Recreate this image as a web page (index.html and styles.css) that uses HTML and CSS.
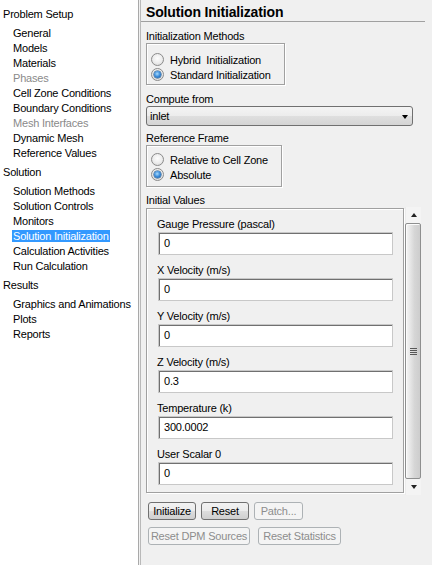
FILE: index.html
```html
<!DOCTYPE html>
<html>
<head>
<meta charset="utf-8">
<link rel="stylesheet" href="styles.css">
</head>
<body>
<div class="app">
  <nav class="tree">
    <div class="sec">
      <div class="sec-title">Problem Setup</div>
      <ul class="items">
        <li>General</li>
        <li>Models</li>
        <li>Materials</li>
        <li class="dis">Phases</li>
        <li>Cell Zone Conditions</li>
        <li>Boundary Conditions</li>
        <li class="dis">Mesh Interfaces</li>
        <li>Dynamic Mesh</li>
        <li>Reference Values</li>
      </ul>
    </div>
    <div class="sec">
      <div class="sec-title">Solution</div>
      <ul class="items">
        <li>Solution Methods</li>
        <li>Solution Controls</li>
        <li>Monitors</li>
        <li><span class="sel">Solution Initialization</span></li>
        <li>Calculation Activities</li>
        <li>Run Calculation</li>
      </ul>
    </div>
    <div class="sec">
      <div class="sec-title">Results</div>
      <ul class="items">
        <li>Graphics and Animations</li>
        <li>Plots</li>
        <li>Reports</li>
      </ul>
    </div>
  </nav>

  <main class="panel">
    <h1 class="title">Solution Initialization</h1>

    <div class="lbl lbl-methods">Initialization Methods</div>
    <div class="group group-methods">
      <div class="radio"><span class="dot"></span>Hybrid&nbsp; Initialization</div>
      <div class="radio"><span class="dot on"></span>Standard Initialization</div>
    </div>

    <div class="lbl lbl-compute">Compute from</div>
    <div class="select"><span>inlet</span><span class="arrow"></span></div>

    <div class="lbl lbl-frame">Reference Frame</div>
    <div class="group group-frame">
      <div class="radio"><span class="dot"></span>Relative to Cell Zone</div>
      <div class="radio"><span class="dot on"></span>Absolute</div>
    </div>

    <div class="lbl lbl-init">Initial Values</div>
    <div class="vals-row">
      <div class="vals">
        <div class="fl">Gauge Pressure (pascal)</div>
        <div class="inp">0</div>
        <div class="fl">X Velocity (m/s)</div>
        <div class="inp">0</div>
        <div class="fl">Y Velocity (m/s)</div>
        <div class="inp">0</div>
        <div class="fl">Z Velocity (m/s)</div>
        <div class="inp">0.3</div>
        <div class="fl">Temperature (k)</div>
        <div class="inp">300.0002</div>
        <div class="fl">User Scalar 0</div>
        <div class="inp">0</div>
      </div>
      <div class="sb">
        <div class="sb-btn"><span class="tri-up"></span></div>
        <div class="thumb"><span class="grip"></span></div>
        <div class="sb-btn"><span class="tri-down"></span></div>
      </div>
    </div>

    <div class="btns">
      <div class="btn w-init">Initialize</div>
      <div class="btn w-reset">Reset</div>
      <div class="btn dis w-patch">Patch...</div>
    </div>
    <div class="btns btns2">
      <div class="btn dis w-dpm">Reset DPM Sources</div>
      <div class="btn dis w-stats">Reset Statistics</div>
    </div>
  </main>
</div>
</body>
</html>
```

FILE: styles.css
```css
html, body {
  margin: 0;
  padding: 0;
  background: #f0f0f0;
}
body {
  font-family: "Liberation Sans", Arial, sans-serif;
  font-size: 11px;
  letter-spacing: -0.2px;
  color: #000;
}
.app {
  display: flex;
  height: 565px;
}

/* ---------- tree ---------- */
.tree {
  width: 138px;
  background: #fff;
  border-right: 1px solid #a9a9a9;
  padding-top: 7px;
  flex: none;
}
.sec { margin-bottom: 4px; }
.sec-title {
  line-height: 15px;
  padding-left: 3px;
  margin-bottom: 4px;
}
.items {
  list-style: none;
  margin: 0;
  padding: 0;
}
.items li {
  line-height: 15px;
  padding-left: 13px;
  white-space: nowrap;
}
.items li.dis { color: #8a8a8a; }
.sel {
  background: #3399ff;
  color: #fff;
  padding: 0 1px;
  margin-left: -1px;
}

/* ---------- panel ---------- */
.panel {
  flex: 1;
  margin-left: 1px;
  border-left: 1px solid #b9b9b9;
  padding-left: 5px;
  display: flex;
  flex-direction: column;
  align-items: flex-start;
}
.title {
  margin: 0 7px 0 -5px;
  padding: 4px 0 0 5px;
  height: 17px;
  line-height: 17px;
  font-size: 14px;
  font-weight: bold;
  letter-spacing: -0.15px;
  border-bottom: 1px solid #a0a0a0;
  align-self: stretch;
}
.lbl { line-height: 14px; }
.lbl-methods { margin-top: 7px; }
.lbl-compute { margin-top: 7px; }
.lbl-frame { margin-top: 5px; }
.lbl-init { margin-top: 6px; }

.group {
  box-sizing: border-box;
  height: 42px;
  border: 1px solid #a0a0a0;
  box-shadow: inset 1px 1px 0 #fff, 1px 1px 0 #fff;
  padding-left: 4px;
}
.group-methods { width: 139px; padding-top: 8px; }
.group-frame { width: 136px; padding-top: 6px; }

.radio {
  display: flex;
  align-items: center;
  height: 15px;
  white-space: nowrap;
}
.dot {
  position: relative;
  width: 11px;
  height: 11px;
  border: 1px solid #8b8b8b;
  border-radius: 50%;
  background: radial-gradient(circle at 50% 40%, #fefefe 0%, #ececec 55%, #cfcfcf 100%);
  margin-right: 6px;
  flex: none;
}
.dot.on::after {
  content: "";
  position: absolute;
  left: 2px;
  top: 2px;
  width: 7px;
  height: 7px;
  border-radius: 50%;
  background: radial-gradient(circle at 45% 40%, #a8dcff 0%, #3a8ad8 50%, #0e4f92 100%);
  box-shadow: 0 0 0 0.5px #1b4a78;
}

.select {
  box-sizing: border-box;
  width: 267px;
  height: 20px;
  border: 1px solid #707070;
  border-radius: 3px;
  background: linear-gradient(#f4f4f4 0%, #ececec 50%, #dfdfdf 51%, #d4d4d4 100%);
  display: flex;
  align-items: center;
  justify-content: space-between;
  padding: 0 4px 0 3px;
}
.arrow {
  width: 0;
  height: 0;
  border-top: 4px solid #000;
  border-left: 3.5px solid transparent;
  border-right: 3.5px solid transparent;
  margin-top: 1px;
}

/* ---------- initial values ---------- */
.vals-row {
  display: flex;
  align-items: flex-start;
}
.vals {
  box-sizing: border-box;
  width: 258px;
  height: 285px;
  margin-top: 1px;
  border: 1px solid #a0a0a0;
  box-shadow: inset 1px 1px 0 #fff, 1px 1px 0 #fff;
  padding: 8px 0 0 10px;
  overflow: hidden;
}
.fl {
  line-height: 15px;
  white-space: nowrap;
}
.inp {
  box-sizing: border-box;
  width: 235px;
  height: 23px;
  margin: 0 0 8px 1px;
  background: #fff;
  border: 1px solid #c8c8c8;
  box-shadow: inset 1px 1px 0 #707070;
  padding-left: 5px;
  line-height: 21px;
}

.sb {
  box-sizing: border-box;
  width: 16px;
  height: 288px;
  margin-left: 1px;
  background: #f4f4f4;
  border-left: 1px solid #ebebeb;
  display: flex;
  flex-direction: column;
}
.sb-btn {
  height: 16px;
  display: flex;
  align-items: center;
  justify-content: center;
  flex: none;
}
.tri-up {
  width: 0;
  height: 0;
  border-bottom: 4px solid #222;
  border-left: 3.5px solid transparent;
  border-right: 3.5px solid transparent;
}
.tri-down {
  width: 0;
  height: 0;
  border-top: 4px solid #222;
  border-left: 3.5px solid transparent;
  border-right: 3.5px solid transparent;
}
.thumb {
  flex: 1;
  box-sizing: border-box;
  margin: 0 0 0 -1px;
  border: 1px solid #8e8f8f;
  border-radius: 2px;
  background: linear-gradient(to right, #f6f6f6 0%, #e4e4e4 35%, #d6d6d6 60%, #cdcdcd 100%);
  box-shadow: inset 1px 1px 0 #fbfbfb;
  display: flex;
  align-items: center;
  justify-content: center;
}
.grip {
  width: 7px;
  height: 7px;
  background: repeating-linear-gradient(to bottom, #585858 0 1px, transparent 1px 2px);
}

/* ---------- buttons ---------- */
.btns {
  display: flex;
  gap: 5px;
  margin: 7px 0 0 2px;
}
.btns2 { gap: 8px; }
.btn {
  box-sizing: border-box;
  height: 18px;
  line-height: 16px;
  text-align: center;
  border: 1px solid #707070;
  border-radius: 3px;
  background: linear-gradient(#f2f2f2 0%, #ebebeb 50%, #dddddd 51%, #cfcfcf 100%);
  white-space: nowrap;
}
.btn.dis {
  border-color: #adb2b5;
  background: #f4f4f4;
  color: #8d8d8d;
}
.w-init { width: 48px; }
.w-reset { width: 48px; }
.w-patch { width: 49px; }
.w-dpm { width: 102px; }
.w-stats { width: 83px; }
```
